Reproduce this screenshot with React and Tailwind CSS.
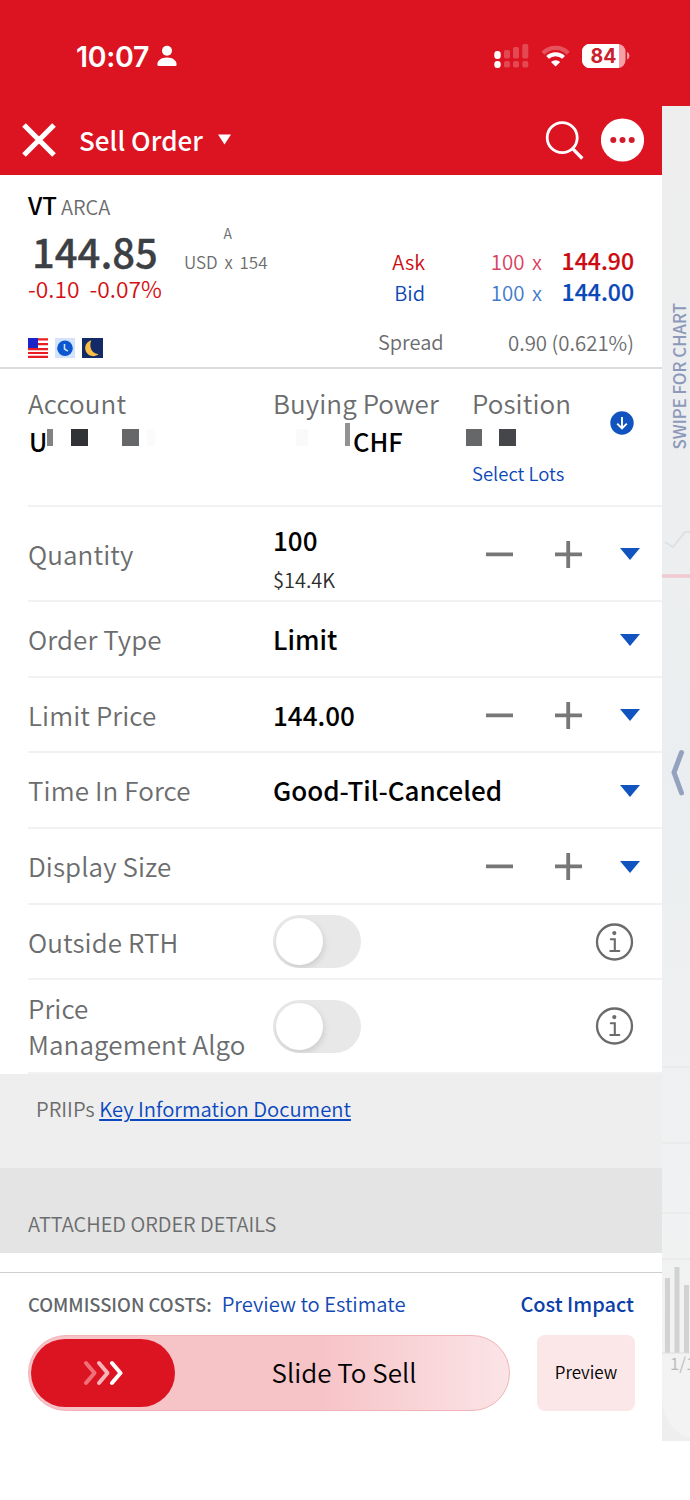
import clsx from 'clsx';

const StatusBar = () => (
  <div className="h-[106px] bg-[#dc1422] flex items-start justify-between pl-[76px] pr-[60px] pt-[38px] text-white">
    <div className="h-9 flex items-center gap-2">
      <span className="mt-px font-['Inter',sans-serif] font-semibold text-[28.5px] leading-9 tracking-[-0.3px]">10:07</span>
      <svg width="20" height="22" viewBox="0 0 20 22" fill="currentColor">
        <circle cx="10" cy="5.8" r="5" />
        <path d="M0.4 19.4C0.4 15.4 4.4 12.6 10 12.6s9.6 2.8 9.6 6.8c0 1-.6 1.6-1.6 1.6H2c-1 0-1.6-.6-1.6-1.6z" />
      </svg>
    </div>
    <svg width="136" height="36" viewBox="494 38 136 36">
      <g fill="#fff">
        <rect x="494.3" y="51" width="6.4" height="8" rx="3" />
        <rect x="494.3" y="61" width="6.4" height="7" rx="3" />
        <g opacity="0.22">
          <rect x="504" y="50" width="6" height="8.5" rx="1.8" />
          <rect x="504" y="61" width="6" height="6.5" rx="1.8" />
          <rect x="513" y="47" width="6" height="11.5" rx="1.8" />
          <rect x="513" y="61" width="6" height="6.5" rx="1.8" />
          <rect x="522.3" y="44" width="6" height="14.5" rx="1.8" />
          <rect x="522.3" y="61" width="6" height="6.5" rx="1.8" />
        </g>
      </g>
      <path d="M543 53.3a17.5 17.5 0 0 1 25.2 0" fill="none" stroke="#fff" strokeOpacity="0.27" strokeWidth="4.2" />
      <path d="M547.6 57.4a11.6 11.6 0 0 1 16 0" fill="none" stroke="#fff" strokeWidth="4" />
      <path d="M555.6 66.6l-4.6-4.7a7 7 0 0 1 9.2 0z" fill="#fff" />
      <rect x="582" y="44" width="43.5" height="24" rx="7.5" fill="#f5a0a6" />
      <path d="M589.5 44H619v24h-29.5a7.5 7.5 0 0 1-7.5-7.5v-9a7.5 7.5 0 0 1 7.5-7.5z" fill="#fff" />
      <path d="M627 52v7.6c1.7-.8 2.4-2.2 2.4-3.8s-.7-3-2.4-3.8z" fill="#f5a0a6" />
      <text x="603.5" y="63" textAnchor="middle" fontFamily="Inter, sans-serif" fontWeight="700" fontSize="19.5" fill="#c9202b">84</text>
    </svg>
  </div>
);

const Header = () => (
  <div className="h-[69px] bg-[#dc1422] flex items-center pl-[22px] pr-[18px] pb-0.5 text-white">
    <svg width="34" height="34" viewBox="0 0 34 34" stroke="currentColor" strokeWidth="5.2">
      <path d="M2 2l30 30M32 2L2 32" />
    </svg>
    <span className="ml-[23px] mt-px text-[26px] leading-9 font-medium tracking-[0.05px]">Sell Order</span>
    <svg className="ml-[15px]" width="13" height="11" viewBox="0 0 14 11" fill="currentColor">
      <path d="M0 0h14L7 11z" />
    </svg>
    <svg className="ml-auto" width="40" height="40" viewBox="0 0 40 40" fill="none" stroke="currentColor" strokeWidth="2.8">
      <circle cx="17.2" cy="17.7" r="15" />
      <path d="M27.8 28.8l9.5 9.7" strokeWidth="3.3" />
    </svg>
    <svg className="ml-4" width="43" height="44" viewBox="0 0 43 44">
      <circle cx="21.5" cy="22" r="21.6" fill="#fff" />
      <g fill="#d31c2b">
        <circle cx="12.3" cy="22" r="3" />
        <circle cx="21.5" cy="22" r="3" />
        <circle cx="30.7" cy="22" r="3" />
      </g>
    </svg>
  </div>
);

const FlagIcon = () => (
  <svg width="20" height="20" viewBox="0 0 20 20">
    <path d="M0 0h20v20H0z" fill="#fff" />
    <path d="M0 1.3h20M0 6.2h20M0 11.2h20M0 15h20M0 18.9h20" stroke="#ea1c24" strokeWidth="2.2" />
    <path d="M0 0h10v10H0z" fill="#1c24c8" />
  </svg>
);

const ClockIcon = () => (
  <svg width="20" height="20" viewBox="0 0 20 20">
    <path d="M0 0h20v20H0z" fill="#d3e3fb" />
    <circle cx="10" cy="10.3" r="7.8" fill="#0b57d0" />
    <path d="M9.5 6v5l3.4 2.2" fill="none" stroke="#cfe0fa" strokeWidth="1.6" />
  </svg>
);

const MoonIcon = () => (
  <svg width="21" height="20" viewBox="0 0 21 20">
    <path d="M0 0h21v20H0z" fill="#122a66" />
    <path d="M9.3 2.2A8.1 8.1 0 1 0 16.8 16C11 16.4 6.2 10 9.3 2.2z" fill="#fbbd45" />
  </svg>
);

const Quote = ({ label, size, price, className, sizeClassName }) => (
  <div className={clsx('h-[31px] flex items-baseline justify-end leading-[31px]', className)}>
    <span className="text-[20px]">{label}</span>
    <span className={clsx('w-[117px] text-right text-[20.5px] [word-spacing:3px]', sizeClassName)}>{size} x</span>
    <span className="w-[92px] text-right text-[23px] font-medium [-webkit-text-stroke:0.2px]">{price}</span>
  </div>
);

const QuotePanel = () => (
  <div className="h-[194px] flex justify-between px-7 pt-4 border-b-2 border-[#dcdcdc]">
    <div>
      <div className="flex items-baseline gap-1 leading-7">
        <span className="text-2xl leading-7 font-medium text-black">VT</span>
        <span className="text-[20px]">ARCA</span>
      </div>
      <div className="mt-2 flex h-11">
        <span className="w-[156px] pl-1 text-[40px] leading-[44px] font-medium text-[#3c4044] [-webkit-text-stroke:0.3px]">144.85</span>
        <div className="-mt-1 flex flex-col items-center gap-[11px]">
          <span className="text-[14px] leading-4 pl-1">A</span>
          <span className="text-[17px] leading-5 [word-spacing:3px]">USD x 154</span>
        </div>
      </div>
      <div className="mt-0.5 text-[22.8px] leading-7 text-[#d40f12] flex gap-[10px]">
        <span>-0.10</span>
        <span>-0.07%</span>
      </div>
      <div className="mt-[35px] flex gap-[7px]">
        <FlagIcon />
        <ClockIcon />
        <MoonIcon />
      </div>
    </div>
    <div className="pt-[54px] w-[259px]">
      <Quote label="Ask" size="100" price="144.90" className="text-[#cc0a12]" sizeClassName="text-[#d9415f]" />
      <Quote label="Bid" size="100" price="144.00" className="text-[#0b48b8]" sizeClassName="text-[#3f7acb]" />
      <div className="mt-[21px] flex justify-between leading-7 pl-[3px]">
        <span className="text-[20px]">Spread</span>
        <span className="text-[20.4px]">0.90 (0.621%)</span>
      </div>
    </div>
  </div>
);

const AccountRow = () => (
  <div className="ml-7 h-[138px] pt-4 flex border-b-2 border-[#f2f2f2]">
    <div className="w-[245px]">
      <div className="text-[26px] leading-9 tracking-[0.1px]">Account</div>
      <div className="mt-0.5 flex items-start h-9">
        <span className="w-[19px] pl-px text-[25px] leading-9 font-medium text-black">U</span>
        <span className="mt-[6px] w-1.5 h-[17px] bg-[#828282]" />
        <span className="mt-[6px] ml-[18px] w-[17px] h-[17px] bg-[#303236]" />
        <span className="mt-[6px] ml-[34px] w-[17px] h-[17px] bg-[#666769]" />
        <span className="mt-[6px] ml-2 w-2 h-[17px] bg-[#fbfbfb]" />
      </div>
    </div>
    <div className="w-[199px]">
      <div className="text-[26px] leading-9 tracking-[0.1px] whitespace-nowrap">Buying Power</div>
      <div className="mt-0.5 flex items-start h-9">
        <span className="ml-[23px] mt-[6px] w-3 h-[17px] bg-[#fafafa]" />
        <span className="ml-[37px] w-[5px] h-[23px] bg-[#929292]" />
        <span className="ml-[3px] text-[25.5px] leading-9 font-medium text-black">CHF</span>
      </div>
    </div>
    <div className="w-[138px]">
      <div className="text-[26px] leading-9 tracking-[0.1px]">Position</div>
      <div className="mt-0.5 flex h-9 -ml-[6px] pt-[6px] gap-[17px]">
        <span className="w-4 h-[17px] bg-[#666769]" />
        <span className="w-[17px] h-[17px] bg-[#44464a]" />
      </div>
      <div className="text-[18.5px] leading-7 text-[#0b48b8]">Select Lots</div>
    </div>
    <svg className="mt-[26px]" width="24" height="24" viewBox="0 0 24 24">
      <circle cx="12" cy="12" r="11.7" fill="#1154c0" />
      <path d="M12 6v11M7.2 12.6L12 17.4l4.8-4.8" fill="none" stroke="#fff" strokeWidth="1.9" />
    </svg>
  </div>
);

const Stepper = () => (
  <svg width="97" height="28" viewBox="0 0 97 28" stroke="#767776" strokeWidth="3.8">
    <path d="M0 14.4h27M69 14.4h27M82.2 1v27" />
  </svg>
);

const Row = ({ label, className, children, stepper, arrow, info }) => (
  <div className={clsx('ml-7 flex items-center border-b-2 border-[#f2f2f2]', className)}>
    <div className="w-[245px] pr-[26px] text-[26px] leading-9 tracking-[0.1px]">{label}</div>
    <div className="flex-1 flex flex-col">{children}</div>
    {stepper && <Stepper />}
    {arrow && (
      <svg className="ml-[37px] mr-[22px] mt-px" width="20" height="12" viewBox="0 0 20 12" fill="#1154c0">
        <path d="M0 0h20L10 12z" />
      </svg>
    )}
    {info && (
      <svg className="mr-7" width="39" height="38" viewBox="0 0 39 38" fill="none" stroke="#6b6b6b" strokeWidth="2.3">
        <circle cx="19.5" cy="19" r="17.5" />
        <path d="M15.8 16.3h4v11.6M15.3 28h9" strokeWidth="2.1" strokeLinecap="round" />
        <circle cx="19.3" cy="10.1" r="2.1" fill="#6b6b6b" stroke="none" />
      </svg>
    )}
  </div>
);

const Value = ({ children }) => (
  <span className="text-[26px] leading-9 font-medium text-black whitespace-nowrap">{children}</span>
);

const Toggle = () => (
  <div className="w-[88px] h-[53px] rounded-full bg-[#e8e8e8] p-[3px] overflow-hidden">
    <div className="w-[47px] h-[47px] rounded-full bg-white shadow-[1px_3px_6px_rgba(0,0,0,0.12)]" />
  </div>
);

const Footer = () => (
  <div className="mt-[19px] border-t border-[#cfcfcf] pl-7 pr-[27px] pt-[17px]">
    <div className="flex items-baseline leading-7 pr-px">
      <span className="text-[18.4px] font-medium text-[#62666a]">COMMISSION COSTS:</span>
      <span className="ml-[10px] text-[20.2px] text-[#1148b4]">Preview to Estimate</span>
      <span className="ml-auto text-[20px] font-medium text-[#0b41a8]">Cost Impact</span>
    </div>
    <div className="mt-[17px] flex justify-between">
      <div className="w-[482px] h-[76px] rounded-full border border-[#f1b3b8] bg-linear-to-r from-[#f6c3c7] from-60% to-[#fbe4e6] flex items-center pl-0.5">
        <div className="w-[144px] h-[68px] rounded-full bg-[#dc1422] flex items-center justify-center">
          <svg width="40" height="26" viewBox="0 0 40 26" fill="none" strokeWidth="4" strokeLinecap="round" strokeLinejoin="round">
            <path d="M3 3l8.5 10L3 23" stroke="#f0707a" />
            <path d="M16 3l8.5 10L16 23" stroke="#f9b4b9" />
            <path d="M29 3l8.5 10L29 23" stroke="#fff" />
          </svg>
        </div>
        <span className="flex-1 -mt-0.5 pl-1 text-center text-[26px] leading-9 text-black">Slide To Sell</span>
      </div>
      <button className="w-[98px] h-[76px] rounded-lg bg-[#fbe7e7] pb-0.5 text-[17px] text-black">Preview</button>
    </div>
  </div>
);

const ChartStrip = () => (
  <div className="w-7 h-[1335px] shrink-0 relative overflow-hidden bg-linear-to-b from-[#eeeeee] via-[#ebeef0] to-[#f3f3f3]">
    <svg className="absolute inset-0" width="28" height="1335" viewBox="662 106 28 1335" fill="none">
      <path d="M665 542l8 5 12-15h6" stroke="#dde1e3" strokeWidth="2" />
      <path d="M662 576h28" stroke="#f2c9d2" strokeWidth="3.5" />
      <path d="M681.5 752.5L674 772.5l7.5 20.5" stroke="#93a2be" strokeWidth="5" strokeLinecap="round" strokeLinejoin="round" />
      <path d="M662 1067h28M662 1143h28M662 1213h28M662 1259h28" stroke="#e9e9e9" strokeWidth="1.5" />
      <path d="M667.5 1278v75M677 1267v86M686.5 1285v68" stroke="#d2d2d2" strokeWidth="5" />
      <path d="M662 1353h28" stroke="#dedede" />
      <path d="M662 1400c2 20 10 32 28 38v3h-28z" fill="#eeeeee" />
    </svg>
    <div className="relative pt-[197px] pl-1.5 flex flex-col items-center">
      <span className="[writing-mode:vertical-rl] rotate-180 text-[16.8px] leading-6 font-medium text-[#8c99ba] whitespace-nowrap">SWIPE FOR CHART</span>
    </div>
    <span className="absolute left-2 top-[1243px] text-[17px] leading-7 text-[#b9b9b9] whitespace-nowrap">1/1</span>
  </div>
);

export default function App() {
  return (
    <div className="w-[690px] h-[1500px] bg-white overflow-hidden font-['Noto_Sans_CJK_SC',sans-serif] font-[350] text-[#6b6c6d]">
      <StatusBar />
      <div className="flex items-start">
        <div className="w-[662px] shrink-0">
          <Header />
          <QuotePanel />
          <AccountRow />
          <Row label="Quantity" className="h-[95px]" stepper arrow>
            <div className="pt-2 flex flex-col gap-2">
              <Value>100</Value>
              <span className="text-[20px] leading-7 text-[#2b2b2b]">$14.4K</span>
            </div>
          </Row>
          <Row label="Order Type" className="h-[76px]" arrow>
            <Value>Limit</Value>
          </Row>
          <Row label="Limit Price" className="h-[75px]" stepper arrow>
            <Value>144.00</Value>
          </Row>
          <Row label="Time In Force" className="h-[76px]" arrow>
            <Value>Good-Til-Canceled</Value>
          </Row>
          <Row label="Display Size" className="h-[76px]" stepper arrow />
          <Row label="Outside RTH" className="h-[75px]" info>
            <Toggle />
          </Row>
          <Row label="Price Management Algo" className="h-[94px]" info>
            <Toggle />
          </Row>
          <div className="h-[94px] bg-[#eeeeee] pl-9 pt-[21px] text-[20.2px] leading-7">
            PRIIPs <a className="text-[#0b48c0] underline underline-offset-2">Key Information Document</a>
          </div>
          <div className="h-[85px] bg-[#e4e4e4] pl-7 pt-[42px] text-[20px] leading-7">ATTACHED ORDER DETAILS</div>
          <Footer />
        </div>
        <ChartStrip />
      </div>
    </div>
  );
}
